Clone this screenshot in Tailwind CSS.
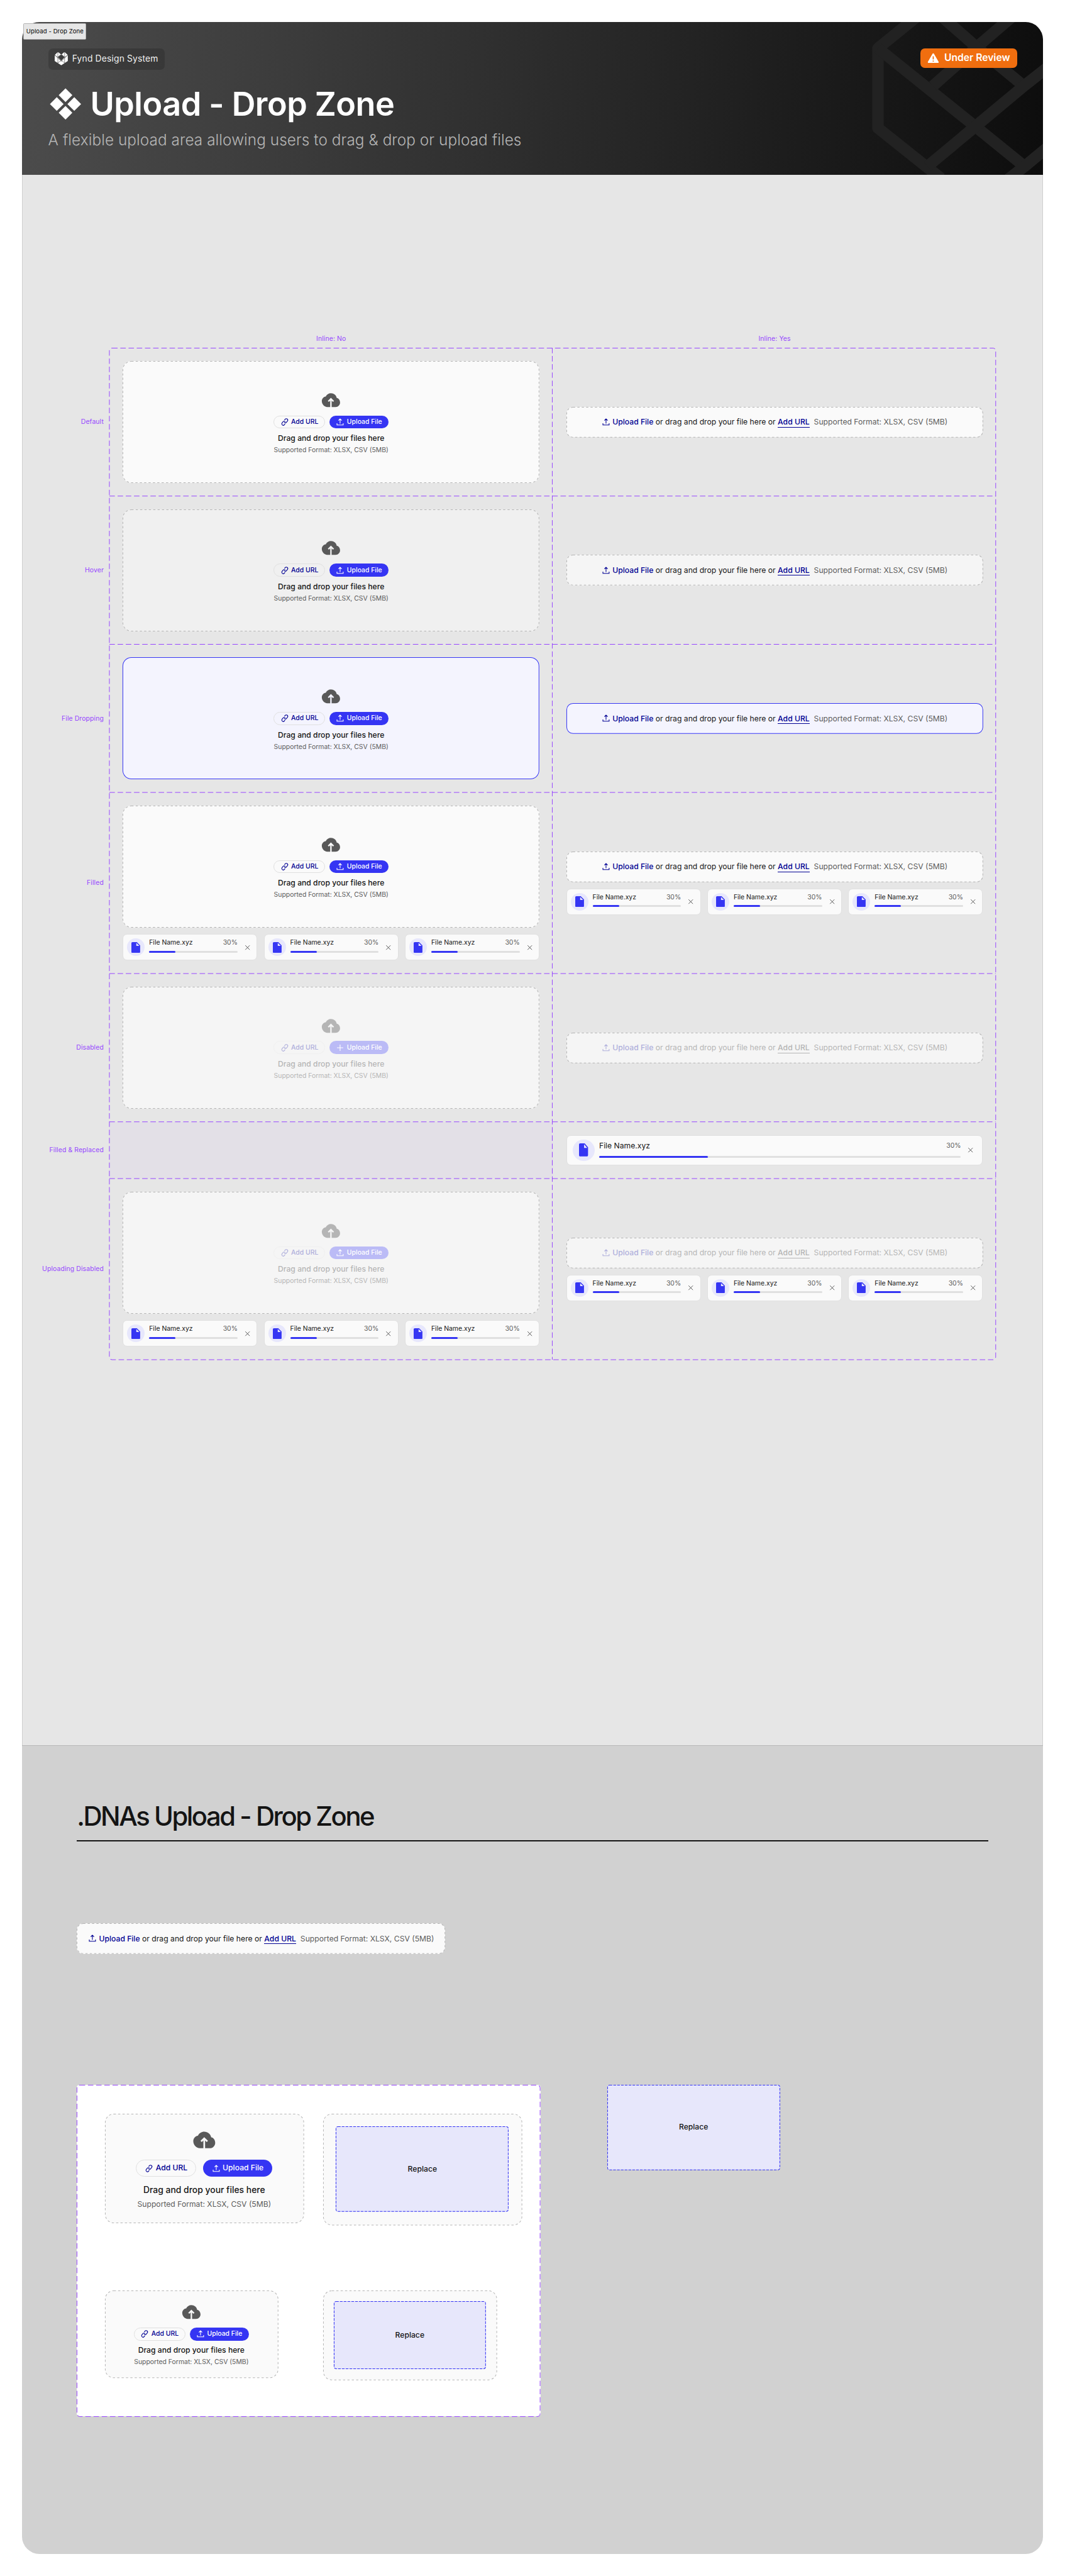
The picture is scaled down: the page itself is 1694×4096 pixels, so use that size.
<!DOCTYPE html>
<html lang="en">
<head>
<meta charset="utf-8">
<title>Upload - Drop Zone</title>
<script src="https://cdn.jsdelivr.net/npm/@tailwindcss/browser@4"></script>
</head>
<body class="bg-white overflow-x-hidden">
<div class="[zoom:0.8697] w-[1948px] h-[4709px] px-10 pt-10 font-['Inter',sans-serif] text-[#141414] relative">
  <div class="w-[1868px] h-[4629px] rounded-[32px] overflow-hidden flex flex-col bg-[#d1d1d1]">

    <!-- Page header -->
    <header class="relative h-[280px] shrink-0 bg-[linear-gradient(95deg,#4c4c4c_0%,#0d0d0d_100%)] pl-12 pt-12 pr-[48px] flex justify-between items-start">
      <svg class="absolute inset-0" width="1868" height="280" viewBox="40 40 1868 280" fill="none" stroke="#222222" stroke-width="21" stroke-linejoin="round">
        <path d="M1677 30L1605.500 88V234L1721 326"/>
        <path d="M1605.500 88L1783.600 231L1873.600 304"/>
        <path d="M1706 157L1786 86L1849 32"/>
        <path d="M1722 30L1786 86L1872.400 157"/>
        <path d="M1917 122L1872.400 157L1783.600 231L1696 304"/>
        <path d="M1917 268L1873.600 304L1844 327"/>
      </svg>
      <div class="relative flex flex-col items-start">
        <div class="h-10 w-[213px] rounded-lg bg-black/16 flex items-center pl-3 gap-2">
          <svg width="24" height="24" viewBox="0 0 24 24">
            <path d="M0 5.200L5.500 0L7 .2L12 4.600L17 .2L18.500 0L24 5.200V16.200L12 24L0 16.200Z" fill="#fff"/>
            <path d="M12 4L14 5.800L18.200 9.300L12 15.500L5.800 9.300L10 5.800Z" fill="#3d3d3d"/>
            <path d="M5.800 0V9.300M18.200 0V9.300M0 5.200L5.800 9.300L10.500 4.500M24 5.200L18.200 9.300L13.500 4.500M5.800 9.300V20M18.200 9.300V20M5.800 19.500L12 15.200L18.200 19.500M0 5.200L12 16.500L24 5.200" stroke="#3d3d3d" stroke-width=".7" fill="none"/>
          </svg>
          <span class="text-[16px] leading-6 tracking-[0.15px] text-white/95 whitespace-nowrap">Fynd Design System</span>
        </div>
        <div class="flex items-center mt-[26px] h-[72px] gap-4">
          <svg class="ml-[3px]" width="58" height="58" viewBox="91 161 58 58" fill="#fff">
            <path d="M120 161.500L132.500 174L120 186.500L107.500 174Z"/><path d="M104 177.700L116.500 190.200L104 202.700L91.500 190.200Z"/><path d="M136 177.700L148.500 190.200L136 202.700L123.500 190.200Z"/><path d="M120 193.700L132.500 206.200L120 218.700L107.500 206.200Z"/>
          </svg>
          <h1 class="text-[60px] leading-[72px] font-semibold tracking-[-0.6px] text-white whitespace-nowrap">Upload - Drop Zone</h1>
        </div>
        <p class="mt-[13px] text-[28px] leading-[34px] font-light tracking-[0.07px] text-[#b5b5b5] whitespace-nowrap">A flexible upload area allowing users to drag &amp; drop or upload files</p>
      </div>
      <div class="relative h-9 w-[177px] rounded-lg bg-[#f06e0f] flex items-center pl-[12px] gap-[8px]">
        <svg width="24" height="24" viewBox="0 0 24 24" fill="#fff"><path d="M12 3.200c-.5 0-1 .3-1.300.8L2.200 18.600c-.5 1 .1 2.200 1.300 2.200h17c1.200 0 1.800-1.200 1.300-2.200L13.300 4c-.3-.5-.8-.8-1.300-.8zM11 8.500h2v6h-2zM11 16.300h2v2.200h-2z" fill-rule="evenodd"/></svg>
        <span class="text-[18px] leading-6 font-semibold text-white whitespace-nowrap">Under Review</span>
      </div>
    </header>

    <!-- Variants -->
    <main class="h-[2871px] shrink-0 bg-[#e6e6e6] border-x border-[#cfcfcf] relative">
      <div class="h-[316px] flex items-end pl-[159px] text-center text-[12px] leading-[15px] tracking-[0.12px] text-[#9747ff]">
        <div class="w-[811px] pb-[9px]">Inline: No</div>
        <div class="w-[811px] pb-[9px]">Inline: Yes</div>
      </div>
      <div class="relative" id="variants"></div>
    </main>

    <!-- Building blocks -->
    <section class="flex-1 border-t border-[#b8b8b8] pl-[100.5px] pt-[100px]">
      <h2 class="w-[1667px] h-[75px] border-b-[2.4px] border-[#141414] text-[48px] leading-[58px] font-medium tracking-[-2.8px] whitespace-nowrap">.DNAs Upload - Drop Zone</h2>
      <div class="w-[674px] mt-[149px]" id="dna-inline"></div>
      <div class="flex items-start gap-[122px] mt-[239px]" id="dna-blocks"></div>
    </section>
  </div>

  <!-- Frame tag -->
  <div class="absolute left-[43px] top-[43px] w-[115px] h-[30px] rounded-[2px] bg-[#e6e6e6] border border-[#b3b3b3] text-[11px] leading-[28px] tracking-[0.1px] text-center text-black whitespace-nowrap">Upload - Drop Zone</div>
</div>

<script>
const outline = (cls, r, dash) => `<svg class="absolute inset-0 w-full h-full overflow-visible" fill="none"><rect x=".5" y=".5" rx="${r}" class="w-[calc(100%-1px)] h-[calc(100%-1px)] ${cls}" stroke-width="1.150" stroke-dasharray="${dash}"/></svg>`;
const svg = (s, body) => `<svg class="shrink-0" width="${s}" height="${s}" viewBox="0 0 24 24" fill="none">${body}</svg>`;
const upload = s => svg(s, '<path d="M12 16.500V4M7.500 8L12 3.600L16.500 8M3.500 15.500V20.300H20.500V15.500" stroke="currentColor" stroke-width="1.9"/>');
const plus = s => svg(s, '<path d="M12 3.500V20.500M3.500 12H20.500" stroke="currentColor" stroke-width="1.900"/>');
const link = s => svg(s, '<g transform="rotate(-50 12 12)" stroke="currentColor" stroke-width="1.900" stroke-linecap="round"><path d="M13.500 12a4 4 0 0 0-4-4H5.500a4 4 0 0 0 0 8H8"/><path d="M10.500 12a4 4 0 0 0 4 4h4a4 4 0 0 0 0-8H16"/></g>');
const cross = '<svg class="shrink-0 text-[#555]" width="20" height="20" viewBox="0 0 20 20"><path d="M6 6L14 14M14 6L6 14" stroke="currentColor" stroke-width="1.100"/></svg>';
const cloud = s => `<svg class="shrink-0" width="${s}" height="${s}" viewBox="0 0 40 40"><path d="M30.600 15.700C29.500 10.800 25.200 7.300 20 7.300c-4.100 0-7.700 2.300-9.500 5.800C6.400 13.700 3.300 17.300 3.300 21.600c0 5.600 4.500 10.800 10 10.800h5.400V20.600l-2.500 2.500-1.900-1.900L20 15.500l5.700 5.700-1.900 1.900-2.500-2.500v11.800h7.100c4.800 0 8.300-3.800 8.300-8.300 0-4.400-2.800-8.100-6.100-8.400z" fill="currentColor"/></svg>`;

/* Block drop zone: big = larger building-block size */
const content = ({big, disabled, icon = upload} = {}) => {
  const navy = disabled ? 'text-[#b0b0dc]' : 'text-[#000093]';
  const border = disabled ? 'border-[#f0f0f0]' : 'border-[#e0e0e0]';
  const fill = disabled ? 'bg-[#bbbbf6]' : 'bg-[#3535f3]';
  const btn = big ? 'h-8 px-[15px] text-[14px] w-max' : 'h-6 px-[11px] text-[12px] w-max';
  return `<div class="flex flex-col items-center whitespace-nowrap ${disabled ? 'text-[#b5b5b5]' : 'text-[#141414]'}">
    <div class="${disabled ? '' : 'text-[#595959]'}">${cloud(big ? 48 : 40)}</div>
    <div class="flex ${big ? 'gap-3 mt-3' : 'gap-2 mt-2'} font-medium">
      <div class="flex items-center gap-1 rounded-full border ${btn} ${border} ${navy}">${link(16)}<span>Add URL</span></div>
      <div class="flex items-center gap-1 rounded-full border border-transparent bg-origin-border text-white ${btn} ${fill}">${icon(16)}<span>Upload File</span></div>
    </div>
    <div class="${big ? 'text-[16px] leading-6 mt-3' : 'text-[14px] leading-5 mt-2'} font-medium">Drag and drop your files here</div>
    <div class="${big ? 'text-[14px] leading-5' : 'text-[12px] leading-4'} mt-1 ${disabled ? '' : 'text-[#5c5c5c]'}">Supported Format: XLSX, CSV (5MB)</div>
  </div>`;
};
const edge = t => t === 'drop' ? ['stroke-[#3535f3]', 'none'] : ['stroke-[#b5b5b5]', '4 4'];
const zone = (bg, t, opts) => `<div class="relative h-[223px] rounded-2xl ${bg} flex items-center justify-center">${outline(edge(t)[0], 15.5, edge(t)[1])}${content(opts)}</div>`;
const inline = (bg, t) => {
  const d = t === 'disabled';
  return `<div class="relative h-14 rounded-xl ${bg} flex items-center justify-center text-[14px] leading-5 whitespace-nowrap ${d ? 'text-[#b5b5b5]' : ''}">${outline(edge(t)[0], 11.5, edge(t)[1])}
    <div class="flex items-center gap-1 font-medium ${d ? 'text-[#b0b0dc]' : 'text-[#000093]'}">${upload(16)}<span>Upload File</span></div>
    <span class="ml-1">or drag and drop your file here or</span>
    <span class="ml-1 h-5 border-b font-medium ${d ? 'border-[#b5b5b5]' : 'text-[#000093] border-[#000093]'}">Add URL</span>
    <span class="ml-2 ${d ? '' : 'text-[#5c5c5c]'}">Supported Format: XLSX, CSV (5MB)</span></div>`;
};
const doc = (w, h) => `<svg width="${w}" height="${h}" viewBox="4 2 16 20" preserveAspectRatio="none"><path d="M6 2C4.900 2 4.010 2.900 4.010 4L4 20C4 21.100 4.890 22 5.990 22H18C19.100 22 20 21.100 20 20V8L14 2H6ZM13 9V3.500L18.500 9H13Z" fill="#3535f3"/></svg>`;
const percent = 30;
const file = big => `<div class="${big ? 'h-14 px-[11px]' : 'h-12 px-[7px]'} w-full rounded-lg bg-[#fafafa] border border-[#e0e0e0] flex items-center gap-2 whitespace-nowrap">
    <div class="${big ? 'size-10' : 'size-8'} shrink-0 rounded-full bg-[#e7e7fc] flex items-center justify-center">${big ? doc(16.5, 24) : doc(16, 20)}</div>
    <div class="grow self-start ${big ? 'pt-[9px]' : 'pt-[7px]'}">
      <div class="flex justify-between ${big ? 'text-[14px] leading-5' : 'text-[12px] leading-4'}"><span>File Name.xyz</span><span class="text-[12px] text-[#5c5c5c]">${percent}%</span></div>
      <div class="${big ? 'mt-2' : 'mt-1.5'} h-1 rounded-[2px] bg-[#e0e0e0]"><div class="h-1 rounded-[2px] bg-[#3535f3]" style="width:${percent}%"></div></div>
    </div>${cross}</div>`;
const files = `<div class="grid grid-cols-3 gap-3 mt-3">${file().repeat(3)}</div>`;

const D = {disabled: true};
const rows = [
  ['Default', 'h-[271px]', zone('bg-[#fafafa]'), inline('bg-[#fafafa]')],
  ['Hover', 'h-[271px]', zone('bg-[#f0f0f0]'), inline('bg-[#f5f5f5]')],
  ['File Dropping', 'h-[271px]', zone('bg-[#f4f4fe]', 'drop'), inline('bg-[#f4f4fe]', 'drop')],
  ['Filled', 'h-[331px]', zone('bg-[#fafafa]') + files, inline('bg-[#fafafa]') + files],
  ['Disabled', 'h-[271px]', zone('bg-[#f5f5f5]', '', {...D, icon: plus}), inline('bg-[#f5f5f5]', 'disabled')],
  ['Filled & Replaced', 'h-[104px]', '', file(true)],
  ['Uploading Disabled', 'h-[331px]', zone('bg-[#f5f5f5]', '', D) + files, inline('bg-[#f5f5f5]', 'disabled') + files],
];
document.getElementById('variants').innerHTML = rows.map(([name, h, a, b]) => `
  <div class="flex ${h}">
    <div class="w-[148.500px] mr-[11px] flex items-center justify-end text-[12px] tracking-[0.12px] text-[#9747ff] whitespace-nowrap">${name.replace('&', '&amp;')}</div>
    <div class="w-[811px] pl-6 pr-[25px] flex flex-col justify-center ${a ? '' : 'bg-[#9747ff]/4'}">${a}</div>
    <div class="w-[811px] pl-6 pr-[25px] flex flex-col justify-center">${b}</div>
  </div>`).join('') + `
  <svg class="absolute left-[159.5px] top-0 overflow-visible" width="1622" height="1850" fill="none" stroke="#9747ff" stroke-width="1.150" stroke-dasharray="10 5">
    <rect x="0" y=".5" width="1621" height="1849.5" rx="5"/>
    <path d="M810 0V1850M0 271H1621M0 542H1621M0 813H1621M0 1144H1621M0 1415H1621M0 1519H1621"/>
  </svg>`;

document.getElementById('dna-inline').innerHTML = inline('bg-[#fafafa]');

const replace = size => `<div class="relative ${size} bg-[#e7e7fb] rounded flex items-center justify-center text-[14px] font-medium">${outline('stroke-[#3535f3]', 3.5, '5 2')}Replace</div>`;
const card = (size, body) => `<div class="relative ${size} shrink-0 rounded-2xl bg-[#fafafa] flex items-center justify-center">${outline('stroke-[#b5b5b5]', 15.5, '4 4')}${body}</div>`;
document.getElementById('dna-blocks').innerHTML = `
  <div class="relative w-[848px] h-[607px] bg-white rounded-[5px] pl-[51px] pt-[53px]">${outline('stroke-[#9747ff]', 5, '10 5')}
    <div class="flex items-start gap-[35px] h-[323px]">${card('w-[364px] h-[200px]', content({big: true}))}${card('w-[364px] h-[204px]', replace('w-[316px] h-[156px]'))}</div>
    <div class="flex items-start gap-[82px]">${card('w-[317px] h-[160px]', content())}${card('w-[318px] h-[164px]', replace('w-[278px] h-[124px]'))}</div>
  </div>
  ${replace('w-[316px] h-[156px]')}`;
</script>
</body>
</html>
